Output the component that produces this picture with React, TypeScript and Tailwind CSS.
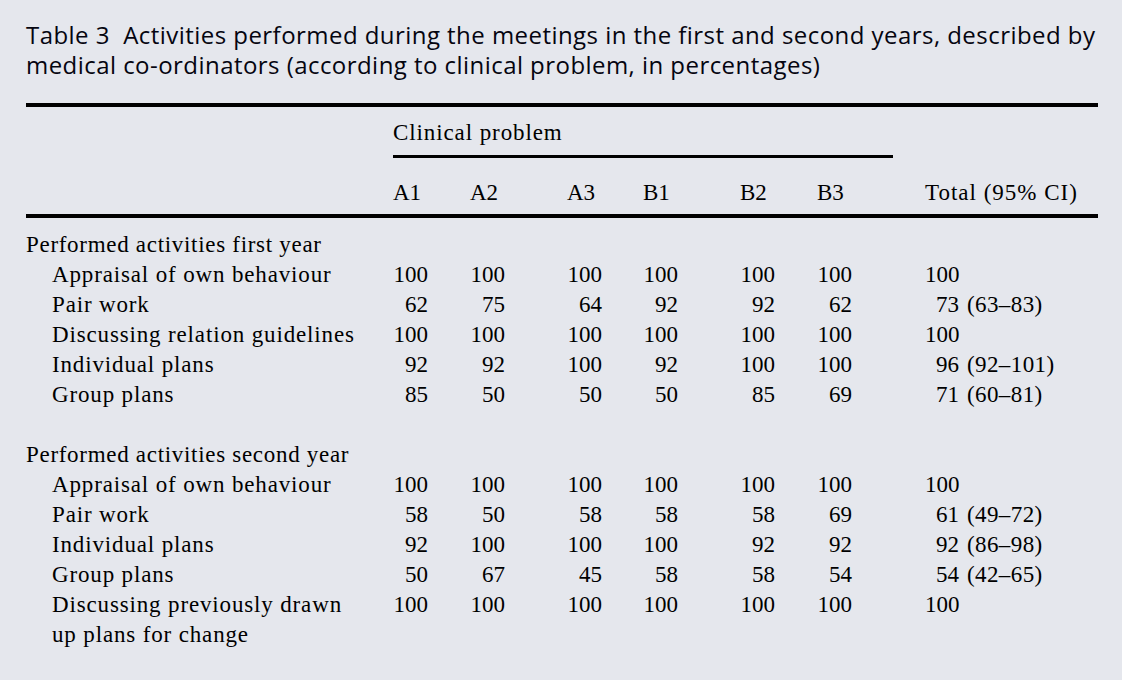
import React from "react";

type Row = { label: React.ReactNode; values: string[]; total: string; ci?: string };

const firstYear: Row[] = [
  { label: "Appraisal of own behaviour", values: ["100", "100", "100", "100", "100", "100"], total: "100" },
  { label: "Pair work", values: ["62", "75", "64", "92", "92", "62"], total: "73", ci: "(63–83)" },
  { label: "Discussing relation guidelines", values: ["100", "100", "100", "100", "100", "100"], total: "100" },
  { label: "Individual plans", values: ["92", "92", "100", "92", "100", "100"], total: "96", ci: "(92–101)" },
  { label: "Group plans", values: ["85", "50", "50", "50", "85", "69"], total: "71", ci: "(60–81)" },
];

const secondYear: Row[] = [
  { label: "Appraisal of own behaviour", values: ["100", "100", "100", "100", "100", "100"], total: "100" },
  { label: "Pair work", values: ["58", "50", "58", "58", "58", "69"], total: "61", ci: "(49–72)" },
  { label: "Individual plans", values: ["92", "100", "100", "100", "92", "92"], total: "92", ci: "(86–98)" },
  { label: "Group plans", values: ["50", "67", "45", "58", "58", "54"], total: "54", ci: "(42–65)" },
  {
    label: (
      <>
        Discussing previously drawn
        <br />
        up plans for change
      </>
    ),
    values: ["100", "100", "100", "100", "100", "100"],
    total: "100",
  },
];

const grid = "grid grid-cols-[367px_77px_97px_76px_97px_77px_108px_173px]";

const DataRow = ({ row }: { row: Row }) => (
  <div className={grid}>
    <div className="pl-[26px] tracking-[0.85px]">{row.label}</div>
    {row.values.map((v, i) => (
      <div key={i}>
        <span className="inline-block w-[35px] text-right">{v}</span>
      </div>
    ))}
    <div className="whitespace-nowrap">
      <span className="inline-block w-[34px] text-right">{row.total}</span>
      {row.ci && <span className="pl-[8px] tracking-[0.4px]">{row.ci}</span>}
    </div>
  </div>
);

const Section = ({ title, rows }: { title: string; rows: Row[] }) => (
  <div>
    <div className="tracking-[0.7px]">{title}</div>
    {rows.map((r, i) => (
      <DataRow key={i} row={r} />
    ))}
  </div>
);

export default function App() {
  return (
    <div className="min-h-screen w-full bg-[#e5e7ed] pl-[26px] pt-[20px] text-black">
      <h1 className="font-['Open_Sans',sans-serif] text-[24px] leading-[30px] tracking-[0.45px] whitespace-nowrap text-[#050510]">
        Table 3&nbsp; Activities performed during the meetings in the first and second years, described by
        <br />
        medical co-ordinators (according to clinical problem, in percentages)
      </h1>

      <div className="mt-[23px] w-[1072px] border-t-4 border-black font-['Liberation_Serif',serif] text-[23px] leading-[30px]">
        <div className="border-b-4 border-black pt-[11px] pb-[6px]">
          <div className={grid}>
            <div />
            <div className="col-span-6">
              <div className="w-[500px] border-b-[3px] border-black pb-[7px] tracking-[0.9px]">Clinical problem</div>
            </div>
            <div />
          </div>
          <div className={`${grid} mt-[20px]`}>
            <div />
            <div>A1</div>
            <div>A2</div>
            <div>A3</div>
            <div>B1</div>
            <div>B2</div>
            <div>B3</div>
            <div className="tracking-[1px]">Total (95% CI)</div>
          </div>
        </div>

        <div className="pt-[12px]">
          <Section title="Performed activities first year" rows={firstYear} />
          <div className="h-[30px]" />
          <Section title="Performed activities second year" rows={secondYear} />
        </div>
      </div>
    </div>
  );
}
